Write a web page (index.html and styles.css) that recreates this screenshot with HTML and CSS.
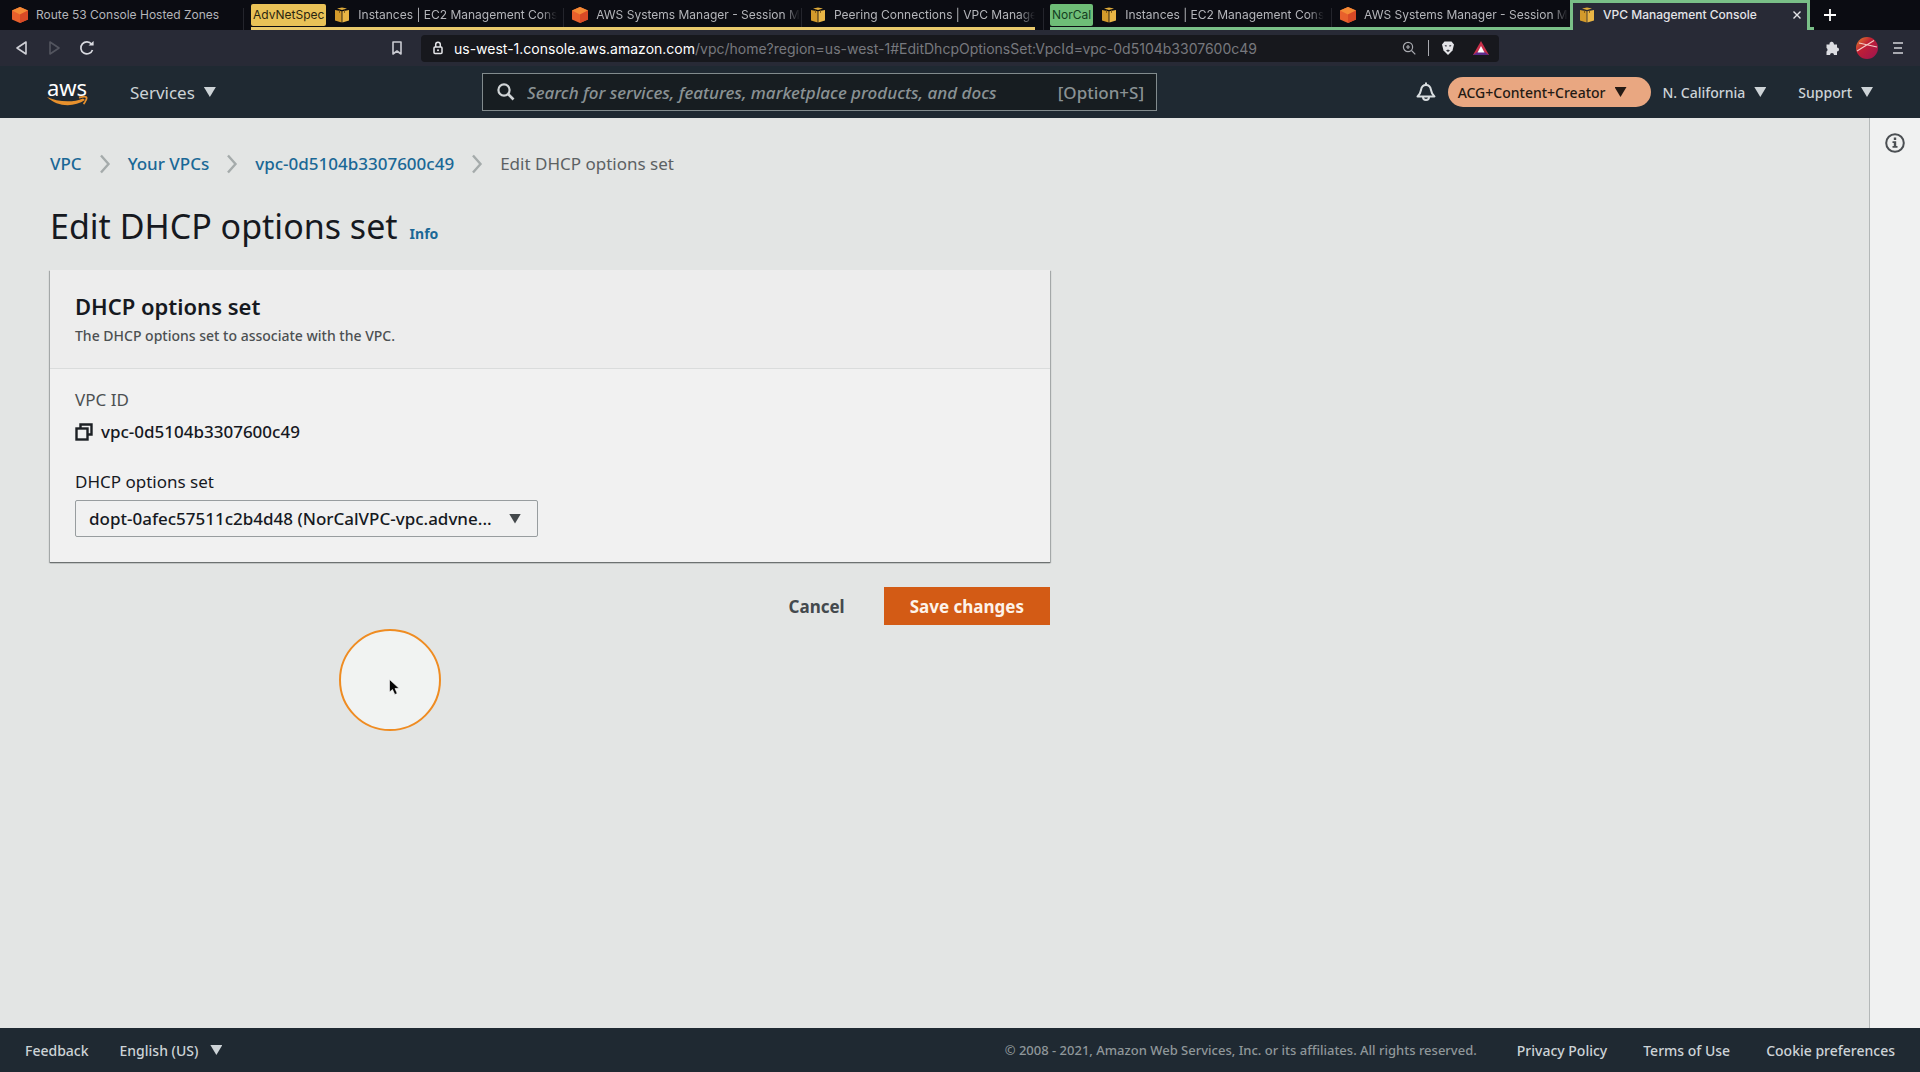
FILE: index.html
```html
<!DOCTYPE html>
<html lang="en">
<head>
<meta charset="utf-8">
<title>VPC Management Console</title>
<link rel="stylesheet" href="styles.css">
</head>
<body>
<svg class="sprite" aria-hidden="true">
  <symbol id="hex" viewBox="0 0 16 16">
    <path d="M8 0 16 3.500V12.500L8 16 0 12.500V3.500z" fill="#e8602c"/>
    <path d="M8 0 16 3.500 8 7.500 0 3.500z" fill="#f48a35"/>
    <path d="M8 7.500 16 3.500V12.500L8 16z" fill="#d84a26"/>
  </symbol>
  <symbol id="cube" viewBox="0 0 16 16">
    <path d="M3 1.500 8 0.500 13 1.500 8 3z" fill="#e0ac3a"/>
    <path d="M1 3 7.600 4.200V15.500L1 13.500z" fill="#d39a2b"/>
    <path d="M15 3 8.400 4.200V15.500L15 13.500z" fill="#e9b545"/>
    <path d="M5 2.500 5.800 2.700V6L5 5.700zM11 2.500 10.200 2.700V6L11 5.700z" fill="#6b4a12"/>
  </symbol>
  <symbol id="chev" viewBox="0 0 12 20"><path d="M2 1.500 9.500 10 2 18.500" fill="none" stroke="#a5abab" stroke-width="2.400"/></symbol>
</svg>

<header class="browser">
  <div class="tabs">
    <button class="tab"><svg class="fav"><use href="#hex"/></svg><span class="tab-text">Route 53 Console Hosted Zones</span></button>
    <span class="divider"></span>
    <div class="group group-yellow">
      <span class="chip">AdvNetSpec</span>
      <button class="tab fade"><svg class="fav"><use href="#cube"/></svg><span class="tab-text">Instances | EC2 Management Cons</span></button>
      <span class="divider"></span>
      <button class="tab fade"><svg class="fav"><use href="#hex"/></svg><span class="tab-text">AWS Systems Manager - Session M</span></button>
      <span class="divider"></span>
      <button class="tab fade tab-last"><svg class="fav"><use href="#cube"/></svg><span class="tab-text">Peering Connections | VPC Manage</span></button>
    </div>
    <span class="divider"></span>
    <div class="group group-green">
      <span class="chip">NorCal</span>
      <button class="tab fade"><svg class="fav"><use href="#cube"/></svg><span class="tab-text">Instances | EC2 Management Cons</span></button>
      <span class="divider"></span>
      <button class="tab fade"><svg class="fav"><use href="#hex"/></svg><span class="tab-text">AWS Systems Manager - Session M</span></button>
    </div>
    <div class="tab tab-active"><svg class="fav"><use href="#cube"/></svg><span class="tab-text">VPC Management Console</span>
      <button class="tab-close" aria-label="Close tab"><svg width="8" height="8" viewBox="0 0 8 8"><path d="M0.500 0.500 7.500 7.500M7.500 0.500 0.500 7.500" stroke="#e4e4e8" stroke-width="1.400"/></svg></button>
    </div>
    <span class="tab-foot"></span>
    <button class="new-tab" aria-label="New tab"><svg width="12" height="12" viewBox="0 0 12 12"><path d="M6 0V12M0 6H12" stroke="#fff" stroke-width="1.800"/></svg></button>
  </div>

  <div class="toolbar">
    <div class="tool-left">
      <button aria-label="Back"><svg width="14" height="16" viewBox="0 0 14 16"><path d="M11 2V14L2 8z" fill="none" stroke="#cfd0d6" stroke-width="1.600" stroke-linejoin="round"/></svg></button>
      <button aria-label="Forward"><svg width="14" height="16" viewBox="0 0 14 16"><path d="M3 2V14L12 8z" fill="none" stroke="#53555f" stroke-width="1.600" stroke-linejoin="round"/></svg></button>
      <button aria-label="Reload"><svg width="16" height="16" viewBox="0 0 16 16"><path d="M13.500 10A6 6 0 1 1 12.600 4.200" fill="none" stroke="#d9dae0" stroke-width="1.700"/><path d="M9.500 5.600H14.600V1z" fill="#d9dae0"/></svg></button>
    </div>
    <button aria-label="Bookmark"><svg width="12" height="16" viewBox="0 0 12 16"><path d="M2 2H10V14L6 11 2 14z" fill="none" stroke="#c9cad1" stroke-width="1.600" stroke-linejoin="round"/></svg></button>
    <div class="address">
      <svg width="12" height="14" viewBox="0 0 12 14"><rect x="2" y="6" width="8" height="6.500" rx="1" fill="none" stroke="#e6e6ea" stroke-width="1.500"/><path d="M3.700 6V3.600a2.300 2.300 0 0 1 4.600 0V6" fill="none" stroke="#e6e6ea" stroke-width="1.500"/><circle cx="6" cy="9.200" r="1" fill="#e6e6ea"/></svg>
      <div class="url" role="textbox" aria-label="Address"><span class="host">us-west-1.console.aws.amazon.com</span>/vpc/home?region=us-west-1#EditDhcpOptionsSet:VpcId=vpc-0d5104b3307600c49</div>
      <svg width="14" height="14" viewBox="0 0 14 14"><g fill="none" stroke="#a9aab0" stroke-width="1.200"><circle cx="6" cy="6" r="4.600"/><path d="M9.500 9.500 13.300 13.300M6 4V8M4 6H8"/></g></svg>
      <span class="bar"></span>
      <svg width="14" height="16" viewBox="0 0 14 16"><path d="M3.500 1.500H10.500L13 4.500 11.500 10.500 7 15 2.500 10.500 1 4.500z" fill="#e4e4e8"/><path d="M3.500 5 6 5.500 5 7zM10.500 5 8 5.500 9 7zM5 10.500 7 9.500 9 10.500 7 12z" fill="#33343c"/></svg>
      <svg class="bat" width="16" height="14" viewBox="0 0 16 14"><path d="M8 0 16 14H0z" fill="#c8304a"/><path d="M0 14 8 8.500 16 14z" fill="#5b2a8a"/><path d="M8 5 11.500 11.500H4.500z" fill="#fff"/></svg>
    </div>
    <div class="tool-right">
      <svg width="16" height="16" viewBox="0 0 16 16"><path d="M1.500 4.500H4.500A2.200 2.200 0 1 1 8.800 3.500L9 4.500H12V7.500A2 2 0 1 1 12 11.600V15H9A2 2 0 0 0 5 15H1.500V11.500A2 2 0 0 0 1.500 8z" fill="#dcdde2"/></svg>
      <svg width="22" height="22" viewBox="0 0 22 22"><defs><linearGradient id="av" x1="0" y1="0" x2="1" y2="1"><stop offset="0" stop-color="#e58a2c"/><stop offset="0.400" stop-color="#c01f35"/><stop offset="1" stop-color="#9c1452"/></linearGradient></defs><circle cx="11" cy="11" r="11" fill="url(#av)"/><path d="M1 14 18 3.500M3 6 21 10" stroke="#f4c9c4" stroke-width="1.200"/></svg>
      <svg width="10" height="12" viewBox="0 0 10 12"><path d="M0 1H10M1 6H9M0 11H10" stroke="#d2d3d9" stroke-width="1.600"/></svg>
    </div>
  </div>
</header>

<nav class="aws-nav">
  <div class="nav-left">
    <a class="logo" href="#" aria-label="AWS home"><span class="logo-text">aws</span>
      <svg width="42" height="11" viewBox="0 0 42 11"><path d="M1 1C11 6 27 7 37 2.500L39 4C28 11.500 11 11 1 1z" fill="#e8912d"/><path d="M33 1.500C37 0.600 40 0.600 40.500 1.400S39.500 6 37.500 8" fill="none" stroke="#e8912d" stroke-width="1.800"/></svg>
    </a>
    <button class="menu menu-services">Services <i class="caret"></i></button>
  </div>
  <label class="search">
    <svg width="18" height="18" viewBox="0 0 18 18"><circle cx="7" cy="7" r="5.600" fill="none" stroke="#d0d4d6" stroke-width="2.200"/><path d="M11 11 16.500 16.500" stroke="#d0d4d6" stroke-width="2.600"/></svg>
    <input type="text" placeholder="Search for services, features, marketplace products, and docs" aria-label="Search">
    <span>[Option+S]</span>
  </label>
  <div class="nav-right">
    <svg width="20" height="20" viewBox="0 0 20 20"><path d="M1.500 14.500C4 12.500 4.500 11 5 8c.5-3 2.500-5 5-5s4.500 2 5 5c.5 3 1 4.500 3.500 6.500z" fill="none" stroke="#d8dde0" stroke-width="2" stroke-linejoin="round"/><path d="M10 3V0.500" stroke="#d8dde0" stroke-width="2"/><path d="M7 15a3 3 0 0 0 6 0" fill="none" stroke="#d8dde0" stroke-width="2"/></svg>
    <button class="menu account">ACG+Content+Creator <i class="caret"></i></button>
    <button class="menu region">N. California <i class="caret"></i></button>
    <button class="menu">Support <i class="caret"></i></button>
  </div>
</nav>

<div class="workspace">
  <main class="content">
    <nav class="crumbs" aria-label="Breadcrumb">
      <a href="#">VPC</a>
      <svg class="chev"><use href="#chev"/></svg>
      <a href="#">Your VPCs</a>
      <svg class="chev"><use href="#chev"/></svg>
      <a href="#">vpc-0d5104b3307600c49</a>
      <svg class="chev"><use href="#chev"/></svg>
      <span>Edit DHCP options set</span>
    </nav>
    <div class="title"><h1>Edit DHCP options set</h1><a href="#">Info</a></div>
    <form class="form">
      <section class="card">
        <div class="card-head">
          <h2>DHCP options set</h2>
          <p>The DHCP options set to associate with the VPC.</p>
        </div>
        <div class="card-body">
          <div class="key">VPC ID</div>
          <div class="value"><button type="button" aria-label="Copy VPC ID"><svg width="18" height="18" viewBox="0 0 18 18"><path d="M5.500 5V1.500H16.500V11.500H13" fill="none" stroke="#1c2024" stroke-width="2.400"/><rect x="1.500" y="5.500" width="11" height="11" fill="none" stroke="#1c2024" stroke-width="2.400"/></svg></button>vpc-0d5104b3307600c49</div>
          <label class="field-label" for="dhcp">DHCP options set</label>
          <div class="select-wrap">
            <select id="dhcp"><option>dopt-0afec57511c2b4d48 (NorCalVPC-vpc.advne...</option></select>
            <i class="caret"></i>
          </div>
        </div>
      </section>
      <div class="actions">
        <button type="button" class="cancel">Cancel</button>
        <button type="button" class="save">Save changes</button>
      </div>
    </form>
    <div class="pointer"><svg width="12" height="18" viewBox="0 0 12 18"><path d="M0.500 0.500V13L3.500 10.500 5.800 15.500 8.200 14.500 6 9.500 10 9.300z" fill="#050505" stroke="#fff" stroke-width="0.600"/></svg></div>
  </main>
  <aside class="help">
    <button aria-label="Info panel"><svg width="20" height="20" viewBox="0 0 20 20"><circle cx="10" cy="10" r="8.800" fill="none" stroke="#4b4f53" stroke-width="2"/><path d="M8.800 4.500H11.200V7H8.800zM7.500 8.300H11.200V13H12.500V14.800H7.500V13H8.800V10H7.500z" fill="#4b4f53"/></svg></button>
  </aside>
</div>

<footer class="footer">
  <a href="#">Feedback</a>
  <button class="menu lang">English (US) <i class="caret"></i></button>
  <span class="copyright">© 2008 - 2021, Amazon Web Services, Inc. or its affiliates. All rights reserved.</span>
  <a href="#">Privacy Policy</a>
  <a href="#">Terms of Use</a>
  <a href="#">Cookie preferences</a>
</footer>
</body>
</html>
```
FILE: styles.css
```css
* { box-sizing: border-box; }
body {
  margin: 0;
  min-height: 100vh;
  display: flex;
  flex-direction: column;
  font-family: "Noto Sans", "Open Sans", sans-serif;
  font-size: 17px;
  color: #16191f;
  background: #e3e5e4;
}
button, input, select { font: inherit; color: inherit; }
button { border: 0; padding: 0; background: none; }
a { text-decoration: none; color: #1a6896; }
h1, h2, p { margin: 0; }
svg { display: block; flex: none; }
.sprite { position: absolute; width: 0; height: 0; }

/* Browser chrome */
.browser { font-family: Inter, sans-serif; background: #282a36; }
.tabs { display: flex; height: 30px; background: #0b0c12; font-size: 12px; line-height: 18px; color: #b4b5ba; }
.tab {
  display: flex;
  align-items: center;
  gap: 8px;
  flex: 238 1 0;
  min-width: 0;
  padding: 0 0 0 8px;
  overflow: hidden;
  white-space: nowrap;
}
.tab-last { flex-grow: 234; }
.tabs > .tab { flex: 0 1 243px; padding-left: 12px; }
.fav { width: 16px; height: 16px; }
.tab-text { overflow: hidden; }
.fade .tab-text {
  -webkit-mask-image: linear-gradient(to right, #000 92%, transparent);
  mask-image: linear-gradient(to right, #000 92%, transparent);
}
.divider { width: 1px; margin: 8px 0 0; background: #24252c; }
.group { display: flex; flex: 0 1 784px; border-bottom: 3px solid; }
.group-yellow { margin-left: 7px; border-color: #e9c96c; }
.group-yellow + .divider { margin-left: 8px; }
.group-green { flex-basis: 520px; margin-left: 6px; border-color: #79bf87; }
.group .tab { padding-top: 2px; }
.chip { display: flex; align-items: center; padding: 0 2px; margin: 4px 0 1px; border-radius: 2px; color: #29250f; }
.group-yellow .chip { background: #e9c257; }
.group-green .chip { background: #6ebd77; color: #143d1f; }
.tabs > .tab-active {
  flex-basis: 240px;
  padding: 0 6px 4px;
  background: #282a36;
  border: 3px solid #79bf87;
  border-bottom: 0;
  color: #e4e4e8;
  font-weight: 500;
}
.tab-close { margin-left: auto; }
.tab-foot { width: 4px; border-bottom: 3px solid #79bf87; }
.new-tab { margin-left: 10px; }

.toolbar { display: flex; align-items: center; height: 36px; }
.tool-left { display: flex; flex: 0 1 391px; gap: 18px; padding-left: 15px; }
.address {
  display: flex;
  align-items: center;
  flex: 0 1 1078px;
  min-width: 0;
  height: 27px;
  margin-left: 18px;
  padding: 0 10px 0 11px;
  background: #17181d;
  border-radius: 4px;
  color: #77787e;
  font-size: 14px;
}
.url { flex: 1; margin-left: 10px; white-space: nowrap; overflow: hidden; }
.host { color: #fff; }
.bar { width: 1px; height: 16px; margin: 0 12px; background: #a9aab0; }
.bat { margin-left: 18px; }
.tool-right { display: flex; align-items: center; gap: 15px; margin-left: auto; padding-right: 17px; }

/* Console header */
.aws-nav { display: flex; align-items: center; height: 52px; background: #1f2932; color: #cdd3d7; }
.nav-left { display: flex; align-items: center; flex: 0 0 482px; padding-left: 46px; }
.logo { display: flex; flex-direction: column; align-items: center; width: 42px; color: #fff; }
.logo-text { font-size: 22px; line-height: 18px; }
.menu { display: flex; align-items: center; gap: 9px; white-space: nowrap; font-size: 14px; font-weight: 500; }
.menu-services { margin-left: 42px; font-size: 17px; font-weight: 400; }
.caret { width: 12px; height: 10px; background: currentColor; clip-path: polygon(0 0, 100% 0, 50% 100%); }
.search {
  display: flex;
  align-items: center;
  flex: 0 1 675px;
  height: 38px;
  padding: 0 12px 0 14px;
  background: #171d21;
  border: 1px solid #828b8d;
  color: #8a9294;
  font-weight: 500;
}
.search input { flex: 1; min-width: 0; margin-left: 12px; padding: 0; border: 0; outline: 0; background: none; }
.search input::placeholder { color: #8a9294; font-style: italic; opacity: 1; }
.nav-right { display: flex; align-items: center; gap: 12px; margin-left: auto; padding-right: 47px; }
.account { height: 30px; padding: 0 24px 0 10px; border-radius: 15px; background: #e9a781; color: #241a14; }
.region { margin-right: 20px; }

/* Page */
.workspace { display: flex; flex: 1; }
.content { flex: 1; padding: 32px 50px; position: relative; }
.help { width: 51px; border-left: 1px solid #b4b8b8; background: #f0f1f1; padding: 15px 0 0 15px; }
.crumbs { display: flex; align-items: center; gap: 17px; line-height: 28px; color: #5c6163; }
.crumbs a { font-weight: 500; }
.chev { width: 12px; height: 20px; }
.title { display: flex; align-items: baseline; gap: 12px; margin-top: 25px; }
.title h1 { font-size: 34px; line-height: 46px; font-weight: 400; }
.title a { font-size: 14px; font-weight: 700; }
.form { max-width: 1000px; margin-top: 21px; }
.card { background: #f1f1f1; box-shadow: 0 1px 1px #6d7171, 1px 1px 1px #b0b4b4, -1px 1px 1px #b0b4b4; }
.card-head { padding: 21px 25px 18px; background: #ededed; border-bottom: 1px solid #dadcdc; }
.card-head h2 { font-size: 22px; line-height: 30px; font-weight: 600; }
.card-head p { font-size: 14px; line-height: 29px; font-weight: 500; color: #4c5052; }
.card-body { padding: 18px 25px 25px; }
.key { line-height: 26px; color: #4c5052; }
.value { display: flex; align-items: center; gap: 8px; margin-top: 6px; line-height: 26px; font-weight: 500; }
.field-label { display: block; margin-top: 24px; line-height: 26px; }
.select-wrap { display: grid; align-items: center; width: 463px; margin-top: 5px; }
.select-wrap > * { grid-area: 1 / 1; }
.select-wrap select {
  appearance: none;
  width: 100%;
  height: 37px;
  padding: 0 36px 0 13px;
  border: 1px solid #989d9f;
  border-radius: 2px;
  background: #f1f1f1;
  font-weight: 500;
}
.select-wrap .caret { justify-self: end; margin-right: 17px; color: #44484b; pointer-events: none; }
.actions { display: flex; justify-content: flex-end; align-items: center; gap: 12px; margin-top: 25px; font-weight: 700; }
.cancel { padding: 0 27px; color: #44494d; }
.save { height: 38px; padding: 0 26px; background: #d35b15; color: #fdf3ea; }
.pointer {
  position: absolute;
  left: 339px;
  top: 511px;
  width: 102px;
  height: 102px;
  padding: 48px;
  border: 2px solid #ef8c22;
  border-radius: 50%;
  background: #f1f3f2;
}

/* Footer */
.footer { display: flex; align-items: center; height: 44px; padding: 0 25px; background: #1f2932; color: #cdd3d7; font-size: 14px; font-weight: 500; }
.footer a { color: inherit; margin-left: 36px; }
.footer a:first-child { margin-left: 0; }
.lang { gap: 12px; margin-left: 31px; }
.copyright { margin-left: auto; margin-right: 4px; color: #8f979a; font-size: 13px; }
```
